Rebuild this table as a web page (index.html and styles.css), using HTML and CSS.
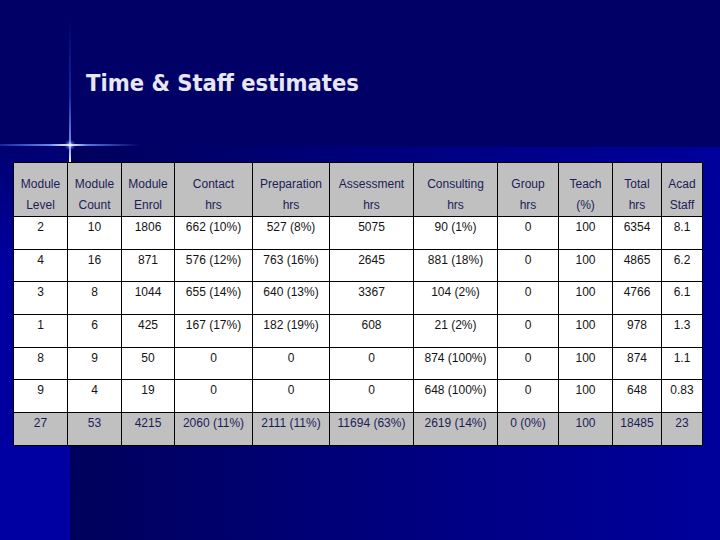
FILE: index.html
```html
<!DOCTYPE html>
<html>
<head>
<meta charset="utf-8">
<link rel="stylesheet" href="styles.css">
</head>
<body>
<div class="slide">
  <div class="spark-v"></div>
  <div class="spark-h"></div>
  <div class="spark-core"></div>
  <h1 class="title">Time &amp; Staff estimates</h1>
  <table class="grid">
    <colgroup>
      <col class="w54"><col class="w54"><col class="w53"><col class="w78"><col class="w77"><col class="w84"><col class="w84"><col class="w61"><col class="w54"><col class="w49"><col class="w41">
    </colgroup>
    <tr class="head">
      <td>Module<br>Level</td><td>Module<br>Count</td><td>Module<br>Enrol</td><td>Contact<br>hrs</td><td>Preparation<br>hrs</td><td>Assessment<br>hrs</td><td>Consulting<br>hrs</td><td>Group<br>hrs</td><td>Teach<br>(%)</td><td>Total<br>hrs</td><td>Acad<br>Staff</td>
    </tr>
    <tr class="row">
      <td>2</td><td>10</td><td>1806</td><td>662 (10%)</td><td>527 (8%)</td><td>5075</td><td>90 (1%)</td><td>0</td><td>100</td><td>6354</td><td>8.1</td>
    </tr>
    <tr class="row">
      <td>4</td><td>16</td><td>871</td><td>576 (12%)</td><td>763 (16%)</td><td>2645</td><td>881 (18%)</td><td>0</td><td>100</td><td>4865</td><td>6.2</td>
    </tr>
    <tr class="row">
      <td>3</td><td>8</td><td>1044</td><td>655 (14%)</td><td>640 (13%)</td><td>3367</td><td>104 (2%)</td><td>0</td><td>100</td><td>4766</td><td>6.1</td>
    </tr>
    <tr class="row">
      <td>1</td><td>6</td><td>425</td><td>167 (17%)</td><td>182 (19%)</td><td>608</td><td>21 (2%)</td><td>0</td><td>100</td><td>978</td><td>1.3</td>
    </tr>
    <tr class="row">
      <td>8</td><td>9</td><td>50</td><td>0</td><td>0</td><td>0</td><td>874 (100%)</td><td>0</td><td>100</td><td>874</td><td>1.1</td>
    </tr>
    <tr class="row">
      <td>9</td><td>4</td><td>19</td><td>0</td><td>0</td><td>0</td><td>648 (100%)</td><td>0</td><td>100</td><td>648</td><td>0.83</td>
    </tr>
    <tr class="total">
      <td>27</td><td>53</td><td>4215</td><td>2060 (11%)</td><td>2111 (11%)</td><td>11694 (63%)</td><td>2619 (14%)</td><td>0 (0%)</td><td>100</td><td>18485</td><td>23</td>
    </tr>
  </table>
</div>
</body>
</html>
```
FILE: styles.css
```css
html, body {
  margin: 0;
  padding: 0;
  background: #000066;
}

.slide {
  position: relative;
  width: 720px;
  height: 540px;
  overflow: hidden;
  display: flex;
  flex-direction: column;
  background:
    linear-gradient(#000066, #000066) 0 0 / 720px 147px no-repeat,
    linear-gradient(to bottom, #000072 0%, #0000a0 30%, #0000a2 100%) 0 147px / 70px 393px no-repeat,
    linear-gradient(to right, #00005c 0%, #000078 40%, #00009c 100%) 70px 147px / 650px 393px no-repeat;
}

.spark-v {
  position: absolute;
  left: 69px;
  top: 18px;
  width: 2px;
  height: 145px;
  background: linear-gradient(to bottom, rgba(40, 70, 220, 0) 0%, rgba(50, 90, 240, 0.45) 55%, rgba(140, 170, 255, 0.85) 88%, #ffffff 100%);
}

.spark-v::after {
  content: "";
  position: absolute;
  left: 0;
  top: 145px;
  width: 2px;
  height: 17px;
  background: linear-gradient(to bottom, #ffffff, rgba(120, 150, 255, 0.6));
}

.spark-h {
  position: absolute;
  left: 0;
  top: 144px;
  width: 140px;
  height: 2px;
  background: linear-gradient(to right, rgba(40, 70, 220, 0.5) 0%, rgba(110, 150, 255, 0.9) 35%, #ffffff 50%, rgba(110, 150, 255, 0.8) 62%, rgba(40, 70, 220, 0) 100%);
}

.spark-core {
  position: absolute;
  left: 64px;
  top: 139px;
  width: 12px;
  height: 12px;
  border-radius: 50%;
  background: radial-gradient(circle, rgba(255, 255, 255, 0.8) 0%, rgba(120, 150, 255, 0.3) 45%, rgba(0, 0, 200, 0) 70%);
}

.title {
  margin: 0;
  padding: 69px 0 0 86px;
  font-family: "DejaVu Sans Condensed", "DejaVu Sans", sans-serif;
  font-weight: bold;
  font-size: 23.5px;
  line-height: 28px;
  color: #e6e6f4;
  position: relative;
}

.grid {
  margin: 65px 0 0 13px;
  width: 690px;
  table-layout: fixed;
  border-collapse: collapse;
  font-family: "Liberation Sans", Arial, sans-serif;
  font-size: 12px;
  position: relative;
}

.w54 { width: 54px; }
.w53 { width: 53px; }
.w78 { width: 78px; }
.w77 { width: 77px; }
.w84 { width: 84px; }
.w61 { width: 61px; }
.w49 { width: 49px; }
.w41 { width: 41px; }

.grid td {
  border: 1px solid #000000;
  text-align: center;
  vertical-align: top;
  padding: 3px 0 0;
  line-height: 14px;
  white-space: nowrap;
}

.head td {
  background: #c0c0c0;
  color: #1c1c58;
  line-height: 21px;
  padding-top: 11px;
}

.head {
  height: 54px;
}

.row {
  height: 32.7px;
}

.row td {
  background: #ffffff;
  color: #141414;
}

.total {
  height: 33px;
}

.total td {
  background: #c0c0c0;
  color: #1c1c58;
}
```
